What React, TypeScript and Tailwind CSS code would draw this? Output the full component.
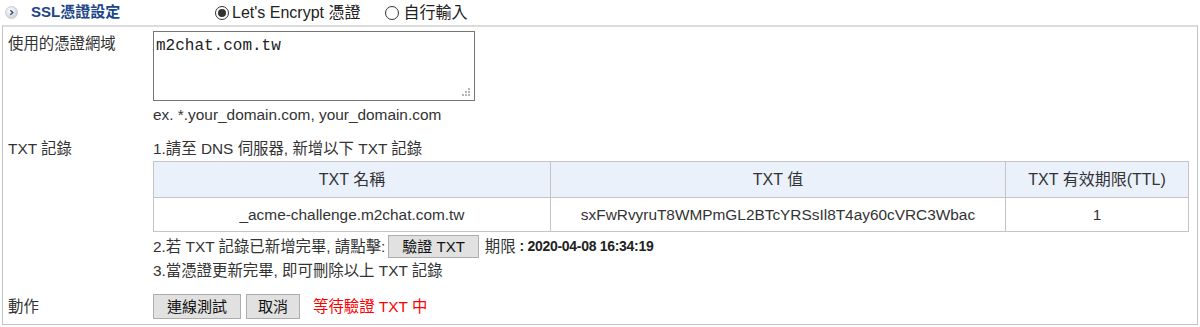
import React from 'react'

const font = "font-['Liberation_Sans','Noto_Sans_CJK_TC',sans-serif]"

function BulletIcon() {
  return (
    <svg width="13" height="13" viewBox="0 0 13 13" aria-hidden>
      <defs>
        <radialGradient id="bg" cx="40%" cy="35%" r="70%">
          <stop offset="0%" stopColor="#ffffff" />
          <stop offset="100%" stopColor="#c9ccd2" />
        </radialGradient>
      </defs>
      <circle cx="6.5" cy="6.5" r="6" fill="url(#bg)" stroke="#c4c7cc" strokeWidth="0.8" />
      <path d="M5.3 4.2 L7.8 6.5 L5.3 8.8" fill="none" stroke="#2d4a7c" strokeWidth="1.4" />
    </svg>
  )
}

function Radio({ checked }: { checked?: boolean }) {
  return (
    <span className="inline-flex h-[14px] w-[14px] items-center justify-center rounded-full border border-[#333] bg-white">
      {checked && <span className="h-[8px] w-[8px] rounded-full bg-[#333]" />}
    </span>
  )
}

function Btn({ children, cls }: { children: React.ReactNode; cls: string }) {
  return (
    <button className={`${cls} border border-[#adadad] bg-[#e1e1e1] text-[15px] leading-none text-[#111]`}>
      {children}
    </button>
  )
}

export default function App() {
  return (
    <div className={`h-[327px] w-[1200px] bg-white text-[15.4px] text-[#333] ${font}`}>
      {/* 標題列 */}
      <div className="flex h-[25px] items-center">
        <span className="ml-[5px] flex">
          <BulletIcon />
        </span>
        <span className="ml-[13px] w-[184px] text-[15px] font-bold text-[#1b4687]">SSL憑證設定</span>
        <label className="flex items-center gap-[3px] text-[16px] text-[#222]">
          <Radio checked />
          <span>Let's Encrypt 憑證</span>
        </label>
        <label className="ml-[25px] flex items-center gap-[4px] text-[16px] text-[#222]">
          <Radio />
          <span>自行輸入</span>
        </label>
      </div>

      {/* 內容 */}
      <div className="ml-[2px] h-[300px] w-[1196px] border-t-2 border-r border-b border-l border-t-[#dcdcdc] border-r-[#c4c4c4] border-b-[#c4c4c4] border-l-[#c4c4c4] pl-[5px] pt-[4px]">
        <div className="grid grid-cols-[145px_1fr]">
          <div className="pt-[4px] leading-[18px]">使用的憑證網域</div>
          <div>
            <div className="relative h-[70px] w-[322px] border border-[#767676] bg-white px-[2px] pt-[4px] font-['Liberation_Mono',monospace] text-[16px] leading-[20px] text-[#222]">
              m2chat.com.tw
              <svg className="absolute right-[3px] bottom-[3px]" width="9" height="9" viewBox="0 0 9 9" aria-hidden>
                <rect x="6" y="0" width="2" height="2" fill="#b5b5b5" />
                <rect x="3" y="3" width="2" height="2" fill="#b5b5b5" />
                <rect x="6" y="3" width="2" height="2" fill="#b5b5b5" />
                <rect x="0" y="6" width="2" height="2" fill="#b5b5b5" />
                <rect x="3" y="6" width="2" height="2" fill="#b5b5b5" />
                <rect x="6" y="6" width="2" height="2" fill="#b5b5b5" />
              </svg>
            </div>
            <div className="mt-[5px] leading-[18px]">ex. *.your_domain.com, your_domain.com</div>
          </div>

          <div className="pt-[16px] leading-[18px]">TXT 記錄</div>
          <div className="pt-[16px]">
            <div className="leading-[18px]">1.請至 DNS 伺服器, 新增以下 TXT 記錄</div>
            <table className="mt-[3px] w-[1036px] border-collapse text-center">
              <thead>
                <tr className="h-[36px] bg-[#eaf1fb] text-[16px]">
                  <th className="w-[397px] border border-[#c4c4c4] font-normal">TXT 名稱</th>
                  <th className="w-[455px] border border-[#c4c4c4] font-normal">TXT 值</th>
                  <th className="border border-[#c4c4c4] font-normal">TXT 有效期限(TTL)</th>
                </tr>
              </thead>
              <tbody>
                <tr className="h-[34px]">
                  <td className="border border-[#c4c4c4]">_acme-challenge.m2chat.com.tw</td>
                  <td className="border border-[#c4c4c4]">sxFwRvyruT8WMPmGL2BTcYRSsIl8T4ay60cVRC3Wbac</td>
                  <td className="border border-[#c4c4c4]">1</td>
                </tr>
              </tbody>
            </table>
            <div className="mt-[3px] flex h-[23px] items-center">
              <span>2.若 TXT 記錄已新增完畢, 請點擊:</span>
              <span className="ml-[3px]">
                <Btn cls="h-[23px] px-[13px]">驗證 TXT</Btn>
              </span>
              <span className="ml-[6px]">期限</span>
              <span className="ml-[4px] text-[14px] font-bold tracking-[-0.3px] text-[#222]">: 2020-04-08 16:34:19</span>
            </div>
            <div className="mt-[4px] leading-[18px]">3.當憑證更新完畢, 即可刪除以上 TXT 記錄</div>
          </div>

          <div className="mt-[14px] flex h-[25px] items-center self-start">動作</div>
          <div className="mt-[14px] flex h-[25px] items-center">
            <Btn cls="h-[25px] px-[13px]">連線測試</Btn>
            <span className="ml-[5px]">
              <Btn cls="h-[25px] px-[11px]">取消</Btn>
            </span>
            <span className="ml-[13px] text-[#f00]">等待驗證 TXT 中</span>
          </div>
        </div>
      </div>
    </div>
  )
}
